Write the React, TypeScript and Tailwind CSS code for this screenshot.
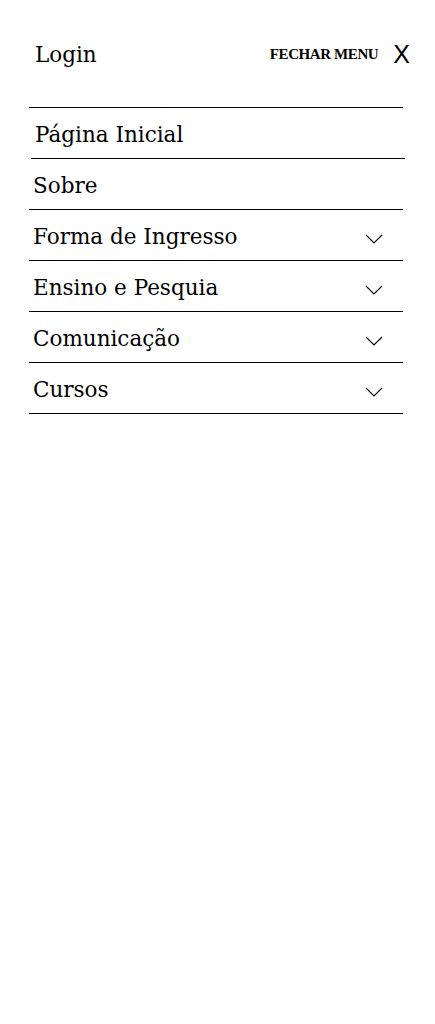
const items = [
    { label: 'Página Inicial', sub: false },
    { label: 'Sobre', sub: false },
    { label: 'Forma de Ingresso', sub: true },
    { label: 'Ensino e Pesquia', sub: true },
    { label: 'Comunicação', sub: true },
    { label: 'Cursos', sub: true },
];

function Chevron() {
    return (
        <svg width="18" height="10" viewBox="0 0 18 10" fill="none" className="mt-[7px]">
            <polyline points="1,1 9,9 17,1" stroke="black" strokeWidth="1.1" />
        </svg>
    );
}

export default function App() {
    return (
        <div className="min-h-screen bg-white text-black font-['DejaVu_Serif',serif]">
            {/* Header */}
            <div className="flex justify-between items-start pl-[35px] pr-[25px] pt-[40px] h-[107px]">
                <span className="text-[21.5px] leading-[30px]">Login</span>
                <button className="flex items-center gap-[15px] mt-[2px]">
                    <span className="text-[15px] font-bold tracking-[-0.4px] font-['Liberation_Serif',serif]">FECHAR MENU</span>
                    <span className="text-[25px] leading-none font-['Liberation_Sans',sans-serif]">X</span>
                </button>
            </div>

            {/* Nav list */}
            <nav className="ml-[29px] mr-[32px] border-t border-black">
                {items.map((item, i) => (
                    <div
                        key={item.label}
                        className={
                            'flex items-center justify-between h-[51px] border-b border-black pl-[4px] pr-[20px]' +
                            (i === 0 ? ' translate-x-[2px]' : '')
                        }
                    >
                        <span className="text-[21.5px] leading-none pt-[4px]">{item.label}</span>
                        {item.sub && <Chevron />}
                    </div>
                ))}
            </nav>
        </div>
    );
}
